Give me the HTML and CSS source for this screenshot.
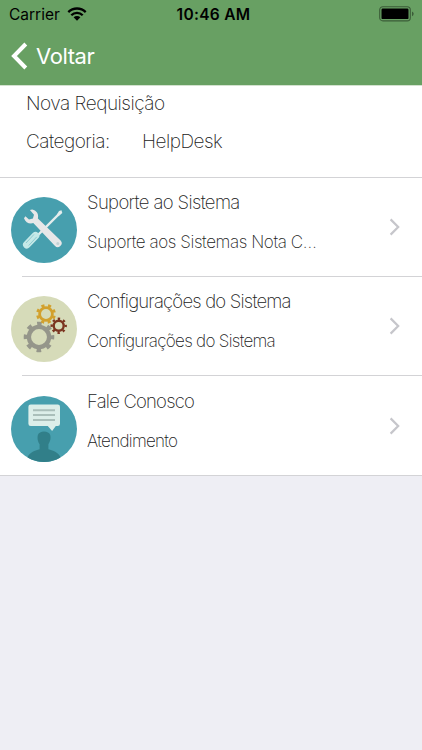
FILE: index.html
```html
<!DOCTYPE html>
<html lang="pt-BR">
<head>
    <meta charset="UTF-8">
    <meta name="viewport" content="width=device-width, initial-scale=1">
    <title>Nova Requisição</title>
    <link rel="stylesheet" href="styles.css">
</head>
<body>
    <header>
        <div class="status-bar">
            <div class="carrier">
                <span>Carrier</span>
                <svg class="wifi" width="20" height="14" viewBox="0 0 20 14">
                    <g fill="none" stroke="#000" stroke-width="2.3">
                        <path d="M1.3 5.1a12.3 12.3 0 0 1 17.4 0"/>
                        <path d="M4.3 8.2a8 8 0 0 1 11.4 0"/>
                    </g>
                    <path d="M6.6 10.3a4.8 4.8 0 0 1 6.8 0L10 13.7z"/>
                </svg>
            </div>
            <div class="time">10:46 AM</div>
            <div class="battery">
                <svg width="36" height="16" viewBox="0 0 36 16">
                    <rect x="0.7" y="0.7" width="30.6" height="14.2" rx="3.2" fill="none" stroke="#3b5c38" stroke-width="1.1"/>
                    <rect x="2.5" y="2.5" width="27" height="10.6" rx="1.2"/>
                    <path d="M33 5.4q1.7.8 1.7 2.4T33 10.2z" fill="#3b5c38"/>
                </svg>
            </div>
        </div>
        <a class="back" href="#">
            <svg width="18" height="30" viewBox="0 0 18 30">
                <path d="M15.8 3L4 15l11.8 12" fill="none" stroke="#fff" stroke-width="4"/>
            </svg>
            <span>Voltar</span>
        </a>
    </header>

    <main>
        <div class="info">
            <div class="title">Nova Requisição</div>
            <div class="category"><span class="label">Categoria:</span><span class="value">HelpDesk</span></div>
        </div>

        <ul class="list">
            <li class="item">
                <svg class="icon" width="66" height="66" viewBox="0 0 66 66">
                    <circle cx="33" cy="33" r="33" fill="#479fae"/>
                    <path d="M48.5 16.5L27 38" stroke="#e4eded" stroke-width="2.4"/>
                    <path d="M45.8 17.8l2.2-3.9 2.5-.6.8 2.7-3.8 3.2z" fill="#e4eded"/>
                    <path d="M15.8 47.7l8.7-9" stroke="#c5e9e8" stroke-width="7.6" stroke-linecap="round"/>
                    <path d="M15 46l8-8.6M17.7 48.5l8-8.6" stroke="#8fcbd0" stroke-width="1"/>
                    <path d="M13 21.2c1.5 4.4 5.2 5.9 9.3 4.9l21.5 22.6a3.8 3.8 0 0 0 5.8-5.2L26.9 21.5c1-4.2-1-7.7-5.7-8.9l-2.3.5 4.1 4.6-1.1 3.9-3.9 1-3.6-3.4z" fill="#e7e7e8"/>
                    <circle cx="46.8" cy="46.6" r="1.5" fill="#c2d1d4"/>
                </svg>
                <div class="text">
                    <div class="name name-wide">Suporte ao Sistema</div>
                    <div class="detail detail-wide">Suporte aos Sistemas Nota C…</div>
                </div>
                <svg class="arrow" width="12" height="18" viewBox="0 0 12 18">
                    <path d="M1.6 1.4L9.2 9l-7.6 7.6" fill="none" stroke="#c6c6cb" stroke-width="2.2"/>
                </svg>
            </li>
            <li class="item">
                <svg class="icon" width="66" height="66" viewBox="0 0 66 66">
                    <circle cx="33" cy="33" r="33" fill="#d6dbb9"/>
                    <g fill="none" stroke="#95968a">
                        <circle cx="28" cy="41" r="10.1" stroke-width="4.3"/>
                        <circle cx="28" cy="41" r="13.3" stroke-width="4" stroke-dasharray="4.6 5.846" stroke-dashoffset="2.3"/>
                    </g>
                    <g fill="none" stroke="#d2a12e">
                        <circle cx="35" cy="18" r="6.4" stroke-width="2.8"/>
                        <circle cx="35" cy="18" r="8.5" stroke-width="2.8" stroke-dasharray="3.1 3.576" stroke-dashoffset="4.9"/>
                    </g>
                    <g fill="none" stroke="#7b3520">
                        <circle cx="47.7" cy="29.8" r="5" stroke-width="2.4"/>
                        <circle cx="47.7" cy="29.8" r="7" stroke-width="2.4" stroke-dasharray="2.4 3.098" stroke-dashoffset="1.2"/>
                    </g>
                </svg>
                <div class="text">
                    <div class="name">Configurações do Sistema</div>
                    <div class="detail">Configurações do Sistema</div>
                </div>
                <svg class="arrow" width="12" height="18" viewBox="0 0 12 18">
                    <path d="M1.6 1.4L9.2 9l-7.6 7.6" fill="none" stroke="#c6c6cb" stroke-width="2.2"/>
                </svg>
            </li>
            <li class="item">
                <svg class="icon" width="66" height="66" viewBox="0 0 66 66">
                    <circle cx="33" cy="33" r="33" fill="#479fae"/>
                    <path d="M16.5 61.5c2-4.6 5-6.1 12.1-8.2v-5.1c-2-3-2.4-6-1.8-9 1.3-5 11.2-5 12.5 0 .6 3 .1 6-1.9 9v5.1c7.1 2.1 10.1 3.6 12.1 8.2A33 33 0 0 1 16.5 61.5z" fill="#317f89"/>
                    <path d="M19.7 8.5h27a2.3 2.3 0 0 1 2.3 2.3v17a2.3 2.3 0 0 1-2.3 2.3h-1.9L41.1 35l-4.3-4.9H19.7a2.3 2.3 0 0 1-2.3-2.3v-17a2.3 2.3 0 0 1 2.3-2.3z" fill="#dceee9"/>
                    <path d="M22 14.2h22M22 19h22M22 23.9h22" stroke="#aabfba" stroke-width="2"/>
                </svg>
                <div class="text">
                    <div class="name">Fale Conosco</div>
                    <div class="detail">Atendimento</div>
                </div>
                <svg class="arrow" width="12" height="18" viewBox="0 0 12 18">
                    <path d="M1.6 1.4L9.2 9l-7.6 7.6" fill="none" stroke="#c6c6cb" stroke-width="2.2"/>
                </svg>
            </li>
        </ul>
    </main>
</body>
</html>
```
FILE: styles.css
```css
* {
    box-sizing: border-box;
}

body {
    margin: 0;
    font-family: 'Inter', 'Liberation Sans', sans-serif;
    background: #eeeef4;
    color: #222;
}

header {
    height: 86px;
    background: #68a063;
    border-bottom: 1px solid #d3e2cf;
}

.status-bar {
    display: grid;
    grid-template-columns: 1fr auto 1fr;
    align-items: center;
    height: 28px;
    padding: 0 7px 0 9px;
    color: #000;
    font-size: 15.5px;
}

.carrier {
    display: flex;
    align-items: center;
    gap: 7px;
}

.time {
    padding-left: 3px;
    font-weight: 600;
    letter-spacing: 0.3px;
}

.battery {
    display: flex;
    justify-content: flex-end;
}

.back {
    display: flex;
    align-items: center;
    gap: 8px;
    height: 56px;
    padding-left: 10px;
    color: #fff;
    font-size: 22px;
    letter-spacing: -0.4px;
    text-decoration: none;
}

.info {
    height: 92px;
    padding: 3px 26px;
    background: #fff;
    border-bottom: 1px solid #d3d3d6;
    font-size: 19px;
    font-weight: 200;
    letter-spacing: -0.5px;
    line-height: 30px;
}

.category {
    display: flex;
    margin-top: 8px;
}

.label {
    width: 116px;
}

.list {
    margin: 0;
    padding: 0;
    list-style: none;
    background: #fff;
    border-bottom: 1px solid #d3d3d6;
}

.item {
    display: flex;
    align-items: center;
    height: 99px;
    padding: 4px 21px 0 11px;
    /* separator starts after the left inset */
    background: linear-gradient(#d3d3d6, #d3d3d6) 22px 100% / 100% 1px no-repeat;
}

.item:last-child {
    padding-top: 6px;
    background: none;
}

.icon {
    flex-shrink: 0;
    margin-right: 10px;
}

.text {
    flex: 1;
    padding-bottom: 15px;
    font-weight: 200;
    white-space: nowrap;
}

.name {
    font-size: 18.5px;
    letter-spacing: -0.8px;
    line-height: 40px;
}

.name-wide {
    letter-spacing: -0.63px;
}

.detail {
    font-size: 17px;
    letter-spacing: -0.7px;
    line-height: 40px;
}

.detail-wide {
    letter-spacing: -0.4px;
}

.arrow {
    margin-bottom: 6px;
}
```
